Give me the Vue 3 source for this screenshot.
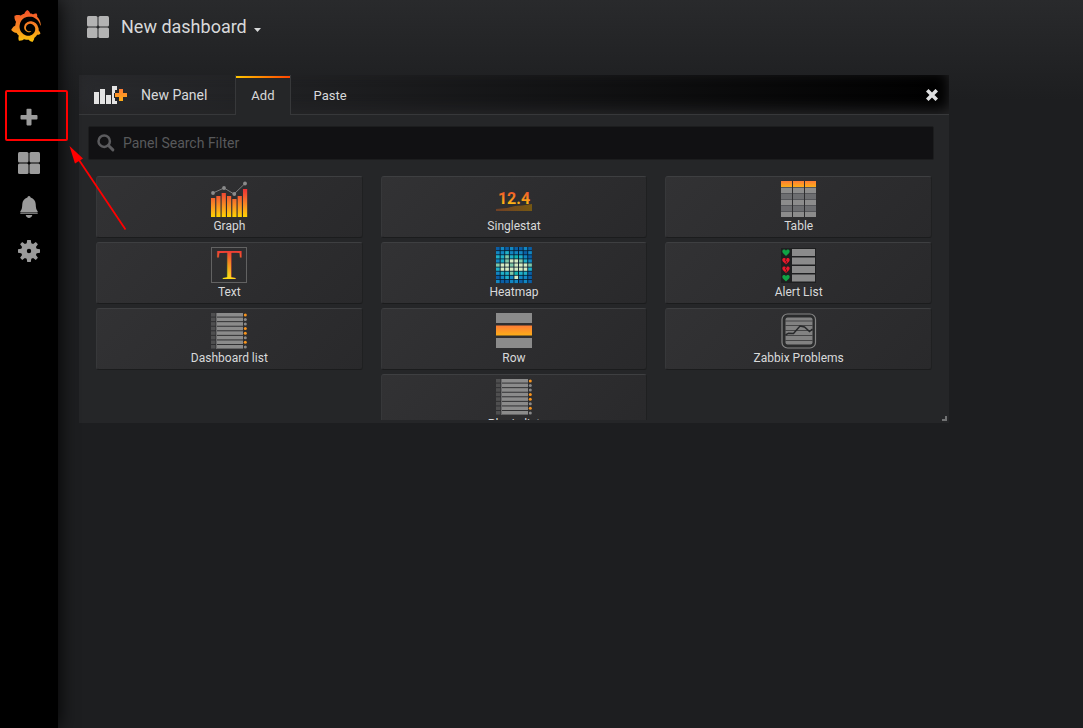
<script setup>
import { ref } from 'vue'

const query = ref('')

const panels = [
  { id: 'graph', name: 'Graph' },
  { id: 'stat', name: 'Singlestat' },
  { id: 'table', name: 'Table' },
  { id: 'text', name: 'Text' },
  { id: 'heatmap', name: 'Heatmap' },
  { id: 'alerts', name: 'Alert List' },
  { id: 'list', name: 'Dashboard list' },
  { id: 'row', name: 'Row' },
  { id: 'zabbix', name: 'Zabbix Problems' },
  { id: 'list', name: 'Plugin list' },
]

const bars = [19, 21, 24, 21, 18, 21, 28]
const tableRows = [
  { y: 7, fill: '#8c8c8c' },
  { y: 13, fill: '#6d6e71' },
  { y: 19, fill: '#8c8c8c' },
  { y: 25, fill: '#6d6e71' },
  { y: 31, fill: '#8c8c8c' },
]
const listDots = ['#f7941e', '#8a8a8a', '#8a8a8a', '#f7941e', '#f7941e', '#8a8a8a', '#f7941e', '#8a8a8a']
const alertRows = ['#10a345', '#e8192c', '#e8192c', '#10a345']

const heatColors = ['#0b5fa5', '#1287c2', '#1fb0c8', '#7fc8a9', '#d5ecc4', '#12b5b0']
const heat = [
  '01010010',
  '11211101',
  '22325210',
  '12344321',
  '34434443',
  '24444442',
  '12235220',
  '01214110',
  '10011010',
]
</script>

<template>
  <div class="app">
    <svg class="defs" width="0" height="0" aria-hidden="true">
      <defs>
        <linearGradient id="fire" x1="0" y1="0" x2="0" y2="1">
          <stop offset="0" stop-color="#f4502a" />
          <stop offset="0.5" stop-color="#f88423" />
          <stop offset="1" stop-color="#fcc40c" />
        </linearGradient>
        <linearGradient id="barfill" gradientUnits="userSpaceOnUse" x1="0" y1="8" x2="0" y2="36">
          <stop offset="0" stop-color="#ee2f35" />
          <stop offset="0.4" stop-color="#f36f2c" />
          <stop offset="0.75" stop-color="#fba919" />
          <stop offset="1" stop-color="#ffd400" />
        </linearGradient>
        <linearGradient id="letter" gradientUnits="userSpaceOnUse" x1="0" y1="4" x2="0" y2="32">
          <stop offset="0" stop-color="#ef3b36" />
          <stop offset="0.5" stop-color="#f7941e" />
          <stop offset="1" stop-color="#ffde17" />
        </linearGradient>
        <linearGradient id="digits" gradientUnits="userSpaceOnUse" x1="0" y1="10" x2="0" y2="23">
          <stop offset="0" stop-color="#f0502c" />
          <stop offset="1" stop-color="#fdb813" />
        </linearGradient>
        <linearGradient id="slope" x1="0" y1="0" x2="1" y2="0">
          <stop offset="0" stop-color="#704026" />
          <stop offset="1" stop-color="#765812" />
        </linearGradient>
        <linearGradient id="rowfill" x1="0" y1="0" x2="0" y2="1">
          <stop offset="0" stop-color="#ff7c35" />
          <stop offset="1" stop-color="#fcae18" />
        </linearGradient>
      </defs>
    </svg>

    <nav class="sidemenu" aria-label="Main">
      <a class="logo" href="#" aria-label="Home">
        <svg width="32" height="32" viewBox="0 0 24 24"><path fill="url(#fire)" d="M23.02 10.59a8.578 8.578 0 0 0-.862-3.034 8.911 8.911 0 0 0-1.789-2.445c.337-1.342-.413-2.505-.413-2.505-1.292-.08-2.113.4-2.416.62-.052-.02-.102-.044-.154-.064-.22-.089-.446-.172-.677-.247-.231-.073-.47-.14-.711-.197a9.867 9.867 0 0 0-.875-.161C14.557.753 12.94 0 12.94 0c-1.804 1.145-2.147 2.744-2.147 2.744l-.018.093c-.098.029-.2.057-.298.088-.138.042-.275.094-.413.143-.138.055-.275.107-.41.166a8.869 8.869 0 0 0-1.557.87l-.063-.029c-2.497-.955-4.716.195-4.716.195-.203 2.658.996 4.33 1.235 4.636a11.608 11.608 0 0 0-.607 2.635C1.636 12.677.953 15.014.953 15.014c1.926 2.214 4.171 2.351 4.171 2.351.003-.002.006-.002.006-.005.285.509.615.994.986 1.446.156.19.32.371.488.548-.704 2.009.099 3.68.099 3.68 2.144.08 3.553-.937 3.849-1.173a9.784 9.784 0 0 0 3.164.501h.08l.055-.003.107-.002.103-.005.003.002c1.01 1.44 2.788 1.646 2.788 1.646 1.264-1.332 1.337-2.653 1.337-2.94v-.058c0-.02-.003-.039-.003-.06.265-.187.52-.387.758-.6a7.875 7.875 0 0 0 1.415-1.7c1.43.083 2.437-.885 2.437-.885-.236-1.49-1.085-2.216-1.264-2.354l-.018-.013-.016-.013a.217.217 0 0 1-.031-.02c.008-.092.016-.18.02-.27.011-.162.016-.323.016-.48v-.253l-.005-.098-.008-.135a1.891 1.891 0 0 0-.01-.13c-.003-.042-.008-.083-.013-.125l-.016-.124-.018-.122a6.215 6.215 0 0 0-2.032-3.73 6.015 6.015 0 0 0-3.222-1.46 6.292 6.292 0 0 0-.85-.048l-.107.002h-.063l-.044.003-.104.008a4.777 4.777 0 0 0-3.335 1.695c-.332.4-.592.84-.768 1.297a4.594 4.594 0 0 0-.312 1.817l.003.091c.005.055.007.11.013.164a3.615 3.615 0 0 0 .698 1.82 3.53 3.53 0 0 0 1.827 1.282c.33.098.66.14.971.137.039 0 .078 0 .114-.002l.063-.003c.02 0 .041-.003.062-.003.034-.002.065-.007.099-.01.007 0 .018-.003.028-.003l.031-.005.06-.008a1.18 1.18 0 0 0 .112-.02c.036-.008.072-.013.109-.024a2.634 2.634 0 0 0 .914-.415c.028-.02.056-.041.085-.065a.248.248 0 0 0 .039-.35.244.244 0 0 0-.309-.06l-.078.042c-.09.044-.184.083-.283.116a2.476 2.476 0 0 1-.475.096c-.028.003-.054.006-.083.006l-.083.002c-.026 0-.054 0-.08-.002l-.102-.006h-.012l-.024.006c-.016-.003-.031-.003-.044-.006-.031-.002-.06-.007-.091-.01a2.59 2.59 0 0 1-.724-.213 2.557 2.557 0 0 1-.667-.438 2.52 2.52 0 0 1-.805-1.475 2.306 2.306 0 0 1-.029-.444l.006-.122v-.023l.002-.031c.003-.021.003-.04.005-.06a3.163 3.163 0 0 1 1.352-2.29 3.12 3.12 0 0 1 .937-.43 2.946 2.946 0 0 1 .776-.101h.06l.07.002.045.003h.026l.07.005a4.041 4.041 0 0 1 1.635.49 3.94 3.94 0 0 1 1.602 1.662 3.77 3.77 0 0 1 .397 1.414l.005.076.003.075c.002.026.002.05.002.075 0 .024.003.052 0 .07v.065l-.002.073-.008.174a6.195 6.195 0 0 1-.08.639 5.1 5.1 0 0 1-.267.927 5.31 5.31 0 0 1-.624 1.13 5.052 5.052 0 0 1-3.237 2.014 4.82 4.82 0 0 1-.649.066l-.039.003h-.287a6.607 6.607 0 0 1-1.716-.265 6.776 6.776 0 0 1-3.4-2.274 6.75 6.75 0 0 1-.746-1.15 6.616 6.616 0 0 1-.714-2.596l-.005-.083-.002-.02v-.056l-.003-.073v-.096l-.003-.104v-.07l.003-.163c.008-.22.026-.45.054-.678a8.707 8.707 0 0 1 .28-1.355c.128-.444.286-.872.473-1.277a7.04 7.04 0 0 1 1.456-2.1 5.925 5.925 0 0 1 .953-.763c.169-.111.343-.213.524-.306.089-.05.182-.091.273-.135.047-.02.093-.042.138-.062a7.177 7.177 0 0 1 .714-.267l.145-.045c.049-.015.098-.026.148-.041.098-.029.197-.052.296-.076.049-.013.1-.02.15-.033l.15-.032.151-.028.076-.013.075-.01.153-.024c.057-.01.114-.013.171-.023l.169-.021c.036-.003.073-.008.106-.01l.073-.008.036-.003.042-.002c.057-.003.114-.008.171-.01l.086-.006h.023l.037-.003.145-.007a7.999 7.999 0 0 1 1.708.125 7.917 7.917 0 0 1 2.048.68 8.253 8.253 0 0 1 1.672 1.09l.09.077.089.078c.06.052.114.107.171.159.057.052.112.106.166.16.052.055.107.107.159.164a8.671 8.671 0 0 1 1.41 1.978c.012.026.028.052.04.078l.04.078.075.156c.023.051.05.1.07.153l.065.15a8.848 8.848 0 0 1 .45 1.34.19.19 0 0 0 .201.142.186.186 0 0 0 .172-.184c.01-.246.002-.532-.024-.856z" /></svg>
      </a>
      <a class="side-link create" href="#" aria-label="Create">
        <svg width="22" height="22" viewBox="0 0 22 22" fill="#9b9b9b"><path d="M9.300 2.700h3.400a.8.8 0 0 1 .8.800V9h5.100a.9.900 0 0 1 .9.900v2.700a.9.900 0 0 1-.9.900H13.500v5.100a.8.800 0 0 1-.8.800H9.300a.8.800 0 0 1-.8-.8V13.500H3.400a.9.900 0 0 1-.9-.9V9.900a.9.900 0 0 1 .9-.9H8.500V3.500a.8.800 0 0 1 .8-.8z" /></svg>
      </a>
      <a class="side-link" href="#" aria-label="Dashboards">
        <svg width="22" height="22" viewBox="0 0 22 22" fill="#9b9b9b"><rect width="10.500" height="10.500" rx="1.500" /><rect x="11.500" width="10.500" height="10.500" rx="1.500" /><rect y="11.500" width="10.500" height="10.500" rx="1.500" /><rect x="11.500" y="11.500" width="10.500" height="10.500" rx="1.500" /></svg>
      </a>
      <a class="side-link" href="#" aria-label="Alerting">
        <svg width="22" height="22" viewBox="0 0 22 22" fill="#9b9b9b"><path d="M11 0a1.600 1.600 0 0 1 1.600 1.500C15.700 2.200 17.500 5 17.700 8c.2 3.500.3 5.500 1.900 7.200.2.300.3 1.300-.3 1.300H2.700c-.6 0-.5-1-.3-1.300C4 13.500 4.100 11.500 4.300 8c.2-3 2-5.800 5.100-6.500A1.600 1.600 0 0 1 11 0zM2.300 17.200h17.400V18H2.300zM7.700 19h6.600c-.3 1.800-1.700 2.900-3.300 2.900S8 20.800 7.700 19z" /></svg>
      </a>
      <a class="side-link" href="#" aria-label="Configuration">
        <svg width="22" height="22" viewBox="0 0 22 22" fill="#9b9b9b" fill-rule="evenodd"><path d="M9.200 0h3.600l.5 3.300 1.800.8 2.700-2 2.100 2.100-2 2.700.8 1.800 3.300.5v3.600l-3.300.5-.8 1.800 2 2.700-2.100 2.100-2.700-2-1.800.8-.5 3.300H9.200l-.5-3.300-1.800-.8-2.700 2-2.100-2.100 2-2.700-.8-1.800L0 12.800V9.200l3.300-.5.800-1.800-2-2.700 2.100-2.100 2.700 2 1.800-.8zM11 8.800a2.200 2.200 0 1 0 0 4.400 2.200 2.200 0 0 0 0-4.400z" /></svg>
      </a>
    </nav>

    <main class="page">
      <header class="navbar">
        <svg width="22" height="22" viewBox="0 0 22 22" fill="#b3b3b3" aria-hidden="true"><rect width="10.500" height="10.500" rx="1.500" /><rect x="11.500" width="10.500" height="10.500" rx="1.500" /><rect y="11.500" width="10.500" height="10.500" rx="1.500" /><rect x="11.500" y="11.500" width="10.500" height="10.500" rx="1.500" /></svg>
        <button class="dash-picker" type="button">
          <span>New dashboard</span>
          <svg width="7" height="4" viewBox="0 0 7 4" aria-hidden="true"><path d="M0 0h7L3.500 4z" fill="#d8d9da" /></svg>
        </button>
      </header>

      <section class="panel">
        <div class="panel-head">
          <svg class="panel-icon" width="34" height="20" viewBox="0 0 34 20" aria-hidden="true">
            <path fill="#e3e3e3" d="M0 7h5v12H0zM6 4h5v15H6zM12 10h5v9h-5zM18 1h5v4h-2v3h-1v5h1v3h2v3h-5z" />
            <path fill="url(#rowfill)" d="M25 4h4v4h4v4h-4v4h-4v-4h-4V8h4z" />
          </svg>
          <h1 class="panel-title">New Panel</h1>
          <div class="tabs" role="tablist">
            <button class="tab active" type="button" role="tab" aria-selected="true">Add</button>
            <button class="tab" type="button" role="tab" aria-selected="false">Paste</button>
          </div>
          <button class="close" type="button" aria-label="Close">
            <svg width="12" height="12" viewBox="0 0 12 12"><path d="M2.500 2.500l7 7m0-7l-7 7" stroke="#dedfe0" stroke-width="3.600" stroke-linecap="square" /></svg>
          </button>
        </div>

        <label class="search">
          <svg width="18" height="18" viewBox="0 0 18 18" fill="none" stroke="#5b5b5e" aria-hidden="true"><circle cx="7.200" cy="7.200" r="5.700" stroke-width="2.500" /><path d="M11.500 11.500l4.400 4.400" stroke-width="2.900" stroke-linecap="round" /></svg>
          <input v-model="query" type="text" placeholder="Panel Search Filter" aria-label="Panel Search Filter" />
        </label>

        <div class="cards">
          <button v-for="p in panels" :key="p.name" class="card" type="button">
            <svg class="viz" width="36" height="36" viewBox="0 0 36 36" aria-hidden="true">
              <template v-if="p.id === 'graph'">
                <rect v-for="(h, i) in bars" :key="i" :x="i * 5.33" :y="36 - h" width="4.200" :height="h" fill="url(#barfill)" />
                <path d="M2 12L13 7l10 6L34 2.500" fill="none" stroke="#7d7d7d" stroke-width="1" />
                <g fill="#8b8b8b"><circle cx="2" cy="12" r="1.900" /><circle cx="13" cy="7" r="1.900" /><circle cx="23.300" cy="13" r="1.900" /><circle cx="34" cy="2.500" r="1.900" /></g>
              </template>
              <template v-else-if="p.id === 'stat'">
                <path d="M0 28l11-1 8-2 7-.5L36 23v7H0z" fill="url(#slope)" />
                <text x="18" y="23" text-anchor="middle" class="stat-digits" fill="url(#digits)">12.4</text>
              </template>
              <template v-else-if="p.id === 'table'">
                <g v-for="c in 3" :key="c">
                  <rect :x="(c - 1) * 12" y="0" width="11" height="6" fill="url(#rowfill)" />
                  <rect v-for="r in tableRows" :key="r.y" :x="(c - 1) * 12" :y="r.y" width="11" height="5" :fill="r.fill" />
                </g>
                <path d="M0 6.500h35M0 12.500h35M0 18.500h35M0 24.500h35M0 30.500h35" stroke="#55565a" stroke-dasharray="11 1" />
              </template>
              <template v-else-if="p.id === 'text'">
                <rect x=".5" y=".5" width="35" height="35" fill="none" stroke="#626262" />
                <text x="18" y="32" text-anchor="middle" class="serif-letter" fill="url(#letter)">T</text>
              </template>
              <template v-else-if="p.id === 'heatmap'">
                <rect width="36" height="36" fill="#071a2c" />
                <template v-for="(line, y) in heat" :key="y">
                  <rect v-for="(c, x) in line.split('')" :key="x" :x="x * 4.6" :y="y * 4.1" width="3.700" height="3.300" :fill="heatColors[c]" />
                </template>
              </template>
              <template v-else-if="p.id === 'alerts'">
                <rect y="1" width="35" height="35" fill="#1e1f20" />
                <g v-for="(c, i) in alertRows" :key="i">
                  <rect x="11" :y="2 + i * 8.500" width="23" height="7" fill="#8b8b8b" />
                  <path :transform="`translate(1 ${2 + i * 8.5})`" :fill="c" d="M4 7L.9 4C-.3 2.400.4.500 2 .5c1 0 1.600.5 2 1.200C4.400 1 5 .5 6 .5c1.600 0 2.300 1.900 1.100 3.500z" />
                  <path v-if="c === '#e8192c'" :transform="`translate(1 ${2 + i * 8.5})`" d="M4.500 1L3.300 3l1.500 1-1 2" fill="none" stroke="#3c1418" stroke-width=".8" />
                </g>
              </template>
              <template v-else-if="p.id === 'list'">
                <g v-for="(c, i) in listDots" :key="i">
                  <rect x="0" :y="i * 4.570" width="4.500" height="3.600" fill="#4f4f50" />
                  <rect x="5" :y="i * 4.570" width="27" height="3.600" fill="#8b8b8b" />
                  <circle cx="34.300" :cy="i * 4.570 + 1.900" r="1.500" :fill="c" />
                </g>
                <path d="M5.500 0v36" stroke="#69696a" />
              </template>
              <template v-else-if="p.id === 'row'">
                <rect y="0" width="36" height="10" fill="#8b8b8b" />
                <rect y="12.500" width="36" height="10" fill="url(#rowfill)" />
                <rect y="25" width="36" height="10" fill="#8b8b8b" />
              </template>
              <template v-else>
                <rect x="1" y="1" width="33.500" height="34" rx="5.500" fill="#2a2b2c" stroke="#858585" stroke-width="1.200" />
                <rect x="4.500" y="4.500" width="27" height="27" rx="2" fill="#828282" />
                <path d="M4 8h28M4 12.500h28M4 17.500h28M4 22.500h28M4 27.500h28" stroke="#454546" stroke-width="1" />
                <path d="M4.500 22l3-1.800 5 .3L19 13l4.500 1 5 4.500L31.500 16" fill="none" stroke="#27282a" stroke-width="1.500" />
              </template>
            </svg>
            <span class="card-name">{{ p.name }}</span>
          </button>
        </div>
        <svg class="grip" width="5" height="5" viewBox="0 0 5 5" aria-hidden="true"><path d="M3 0h2v5H0V3h3z" fill="#707172" /></svg>
      </section>
    </main>

    <svg class="callout" width="130" height="240" viewBox="0 0 130 240" aria-hidden="true">
      <rect x="6" y="91" width="61" height="49" rx="1" fill="none" stroke="#f00" stroke-width="2" />
      <path d="M125.500 229.500L77 157" stroke="#f00" stroke-width="1.800" />
      <path d="M69.500 146l13.500 12.500-8 5z" fill="#f00" />
    </svg>
  </div>
</template>

<style>
body {
  background: #1d1e20;
}
</style>

<style scoped>
.app {
  position: relative;
  display: flex;
  min-height: 100vh;
  color: #d8d9da;
  font-family: Roboto, "Liberation Sans", sans-serif;
  font-size: 14px;
}
.app * {
  box-sizing: border-box;
}
.defs {
  position: absolute;
}
button {
  padding: 0;
  border: 0;
  background: none;
  color: inherit;
  font: inherit;
  cursor: pointer;
}
svg {
  display: block;
  flex: none;
}
.sidemenu {
  position: relative;
  z-index: 1;
  flex: 0 0 58px;
  display: flex;
  flex-direction: column;
  padding-top: 10px;
  background: #000;
  box-shadow: 0 0 20px #000;
}
.logo {
  margin: 0 0 53px 10px;
}
.side-link {
  display: grid;
  place-items: center;
  height: 44px;
}
.create {
  margin-bottom: 2px;
}
.page {
  flex: 1;
  min-width: 0;
  background: linear-gradient(180deg, #292a2c 0, #1d1e20 100px);
}
.navbar {
  display: flex;
  align-items: center;
  gap: 12px;
  height: 54px;
  padding-left: 29px;
}
.dash-picker {
  display: flex;
  align-items: center;
  gap: 7px;
  font-size: 18px;
  line-height: 24px;
}
.dash-picker svg {
  margin-top: 5px;
}
.panel {
  position: relative;
  height: 348px;
  margin: 21px 134px 0 21px;
  display: flex;
  flex-direction: column;
  background: #252628;
  overflow: hidden;
}
.panel-head {
  flex: none;
  display: flex;
  align-items: center;
  height: 40px;
  padding: 0 10px 0 15px;
  border-bottom: 1px solid #37383a;
  background: linear-gradient(90deg, #292a2d, #000);
  box-shadow: inset 0 -4px 14px #262628;
}
.panel-title {
  margin: 0 28px 0 13px;
  font-size: 14px;
  font-weight: 400;
  line-height: 20px;
}
.tabs {
  display: flex;
  align-self: stretch;
  margin-bottom: -1px;
}
.tab {
  padding: 0 23px;
  font-size: 13px;
}
.tab.active {
  position: relative;
  padding: 0 15px;
  border: 1px solid #37383a;
  border-width: 0 1px;
  background: #252628;
}
.tab.active::before {
  content: "";
  position: absolute;
  top: 1px;
  left: 0;
  right: 0;
  height: 2px;
  background: linear-gradient(90deg, #ffc500, #ff4400);
}
.close {
  display: grid;
  place-items: center;
  width: 14px;
  height: 20px;
  margin-left: auto;
}
.search {
  flex: none;
  display: flex;
  align-items: center;
  gap: 8px;
  height: 34px;
  margin: 11px 15px 0 9px;
  padding: 0 8px;
  border: 1px solid #1c1d1e;
  border-radius: 2px;
  background: #111113;
}
.search input {
  flex: 1;
  min-width: 0;
  padding: 0;
  border: 0;
  outline: 0;
  background: transparent;
  color: #d8d9da;
  font: inherit;
}
.search input::placeholder {
  color: #58595b;
  opacity: 1;
}
.cards {
  flex: 1;
  min-height: 0;
  display: flex;
  flex-wrap: wrap;
  justify-content: center;
  align-content: flex-start;
  gap: 4px 18px;
  margin: 16px 17px 3px;
  overflow: hidden;
}
.card {
  display: flex;
  flex-direction: column;
  align-items: center;
  width: calc((100% - 36px) / 3);
  height: 62px;
  padding-top: 4px;
  border: 1px solid;
  border-color: #3e3f41 #1f2021 #1b1c1d #37383a;
  border-radius: 3px;
  background: linear-gradient(135deg, #323234, #29292b);
}
.card-name {
  margin-top: 1px;
  font-size: 12px;
  line-height: 16px;
}
.viz {
  overflow: visible;
}
.stat-digits {
  font: bold 16px Roboto, sans-serif;
}
.serif-letter {
  font: 42px "Liberation Serif", serif;
}
.grip {
  position: absolute;
  right: 2px;
  bottom: 2px;
}
.callout {
  position: absolute;
  z-index: 2;
  top: 0;
  left: 0;
  pointer-events: none;
}
</style>
